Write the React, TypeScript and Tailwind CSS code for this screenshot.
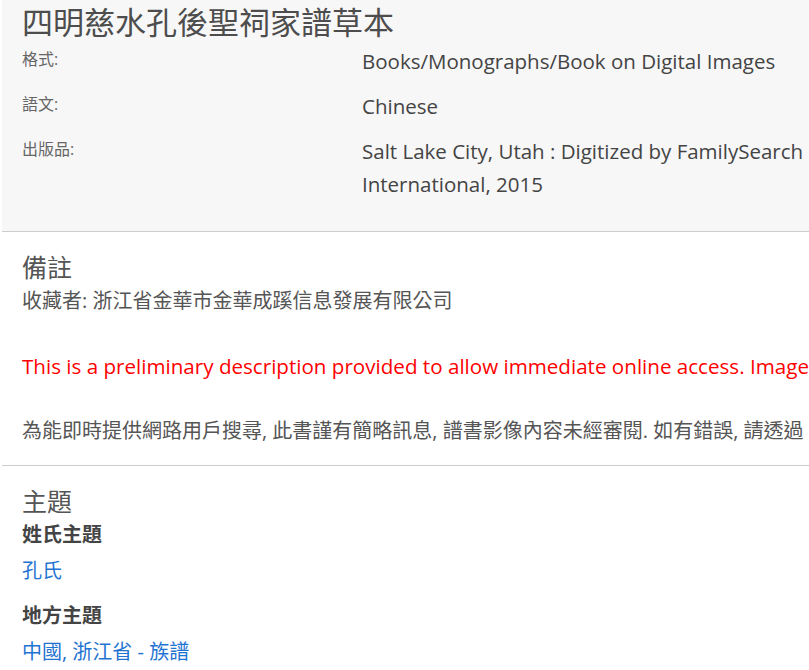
import React from "react";

const font = {
  fontFamily: '"Open Sans", "Noto Sans CJK TC", sans-serif',
};

export default function App() {
  return (
    <div className="w-[809px] h-[670px] overflow-hidden bg-white pl-[2px]" style={font}>
      <div className="w-[1000px]">
        <div className="bg-[#f7f7f7] border-b border-[#cccccc] pl-5 pt-[1px] pb-[30px]">
          <h1 className="text-[31px] leading-[42px] text-[#4d4d4d] font-normal">四明慈水孔後聖祠家譜草本</h1>
          <div className="flex flex-col gap-[12px] mt-[2px]">
            <div className="flex">
              <div className="w-[340px] text-[16px] leading-[28px] text-[#666666]">格式:</div>
              <div className="w-[445px] text-[20.5px] leading-[33px] text-[#444444]">Books/Monographs/Book on Digital Images</div>
            </div>
            <div className="flex">
              <div className="w-[340px] text-[16px] leading-[28px] text-[#666666]">語文:</div>
              <div className="w-[445px] text-[20.5px] leading-[33px] text-[#444444]">Chinese</div>
            </div>
            <div className="flex">
              <div className="w-[340px] text-[16px] leading-[28px] text-[#666666]">出版品:</div>
              <div className="w-[445px] text-[20.5px] leading-[33px] text-[#444444]">Salt Lake City, Utah : Digitized by FamilySearch International, 2015</div>
            </div>
          </div>
        </div>

        <div className="border-b border-[#cccccc] pl-5 pt-[18px] pb-[17px]">
          <h2 className="text-[25px] leading-[34px] text-[#555555] font-normal">備註</h2>
          <p className="text-[20px] leading-[34px] text-[#555555]">收藏者: 浙江省金華市金華成蹊信息發展有限公司</p>
          <p className="mt-[31px] text-[20.6px] leading-[34px] text-[#ff0000] whitespace-nowrap">This is a preliminary description provided to allow immediate online access. Images have not been reviewed for content.</p>
          <p className="mt-[31px] text-[20px] leading-[34px] text-[#555555] whitespace-nowrap">為能即時提供網路用戶搜尋, 此書謹有簡略訊息, 譜書影像內容未經審閱. 如有錯誤, 請透過</p>
        </div>

        <div className="pl-5 pt-[18px]">
          <h2 className="text-[25px] leading-[34px] text-[#555555] font-normal">主題</h2>
          <div className="text-[20px] leading-[34px] text-[#444444] font-bold">姓氏主題</div>
          <div className="mt-[2px] text-[20px] leading-[34px] text-[#1f73d1]">孔氏</div>
          <div className="mt-[11px] text-[20px] leading-[34px] text-[#444444] font-bold">地方主題</div>
          <div className="mt-[2px] text-[20px] leading-[34px] text-[#1f73d1]">中國, 浙江省 - 族譜</div>
        </div>
      </div>
    </div>
  );
}
